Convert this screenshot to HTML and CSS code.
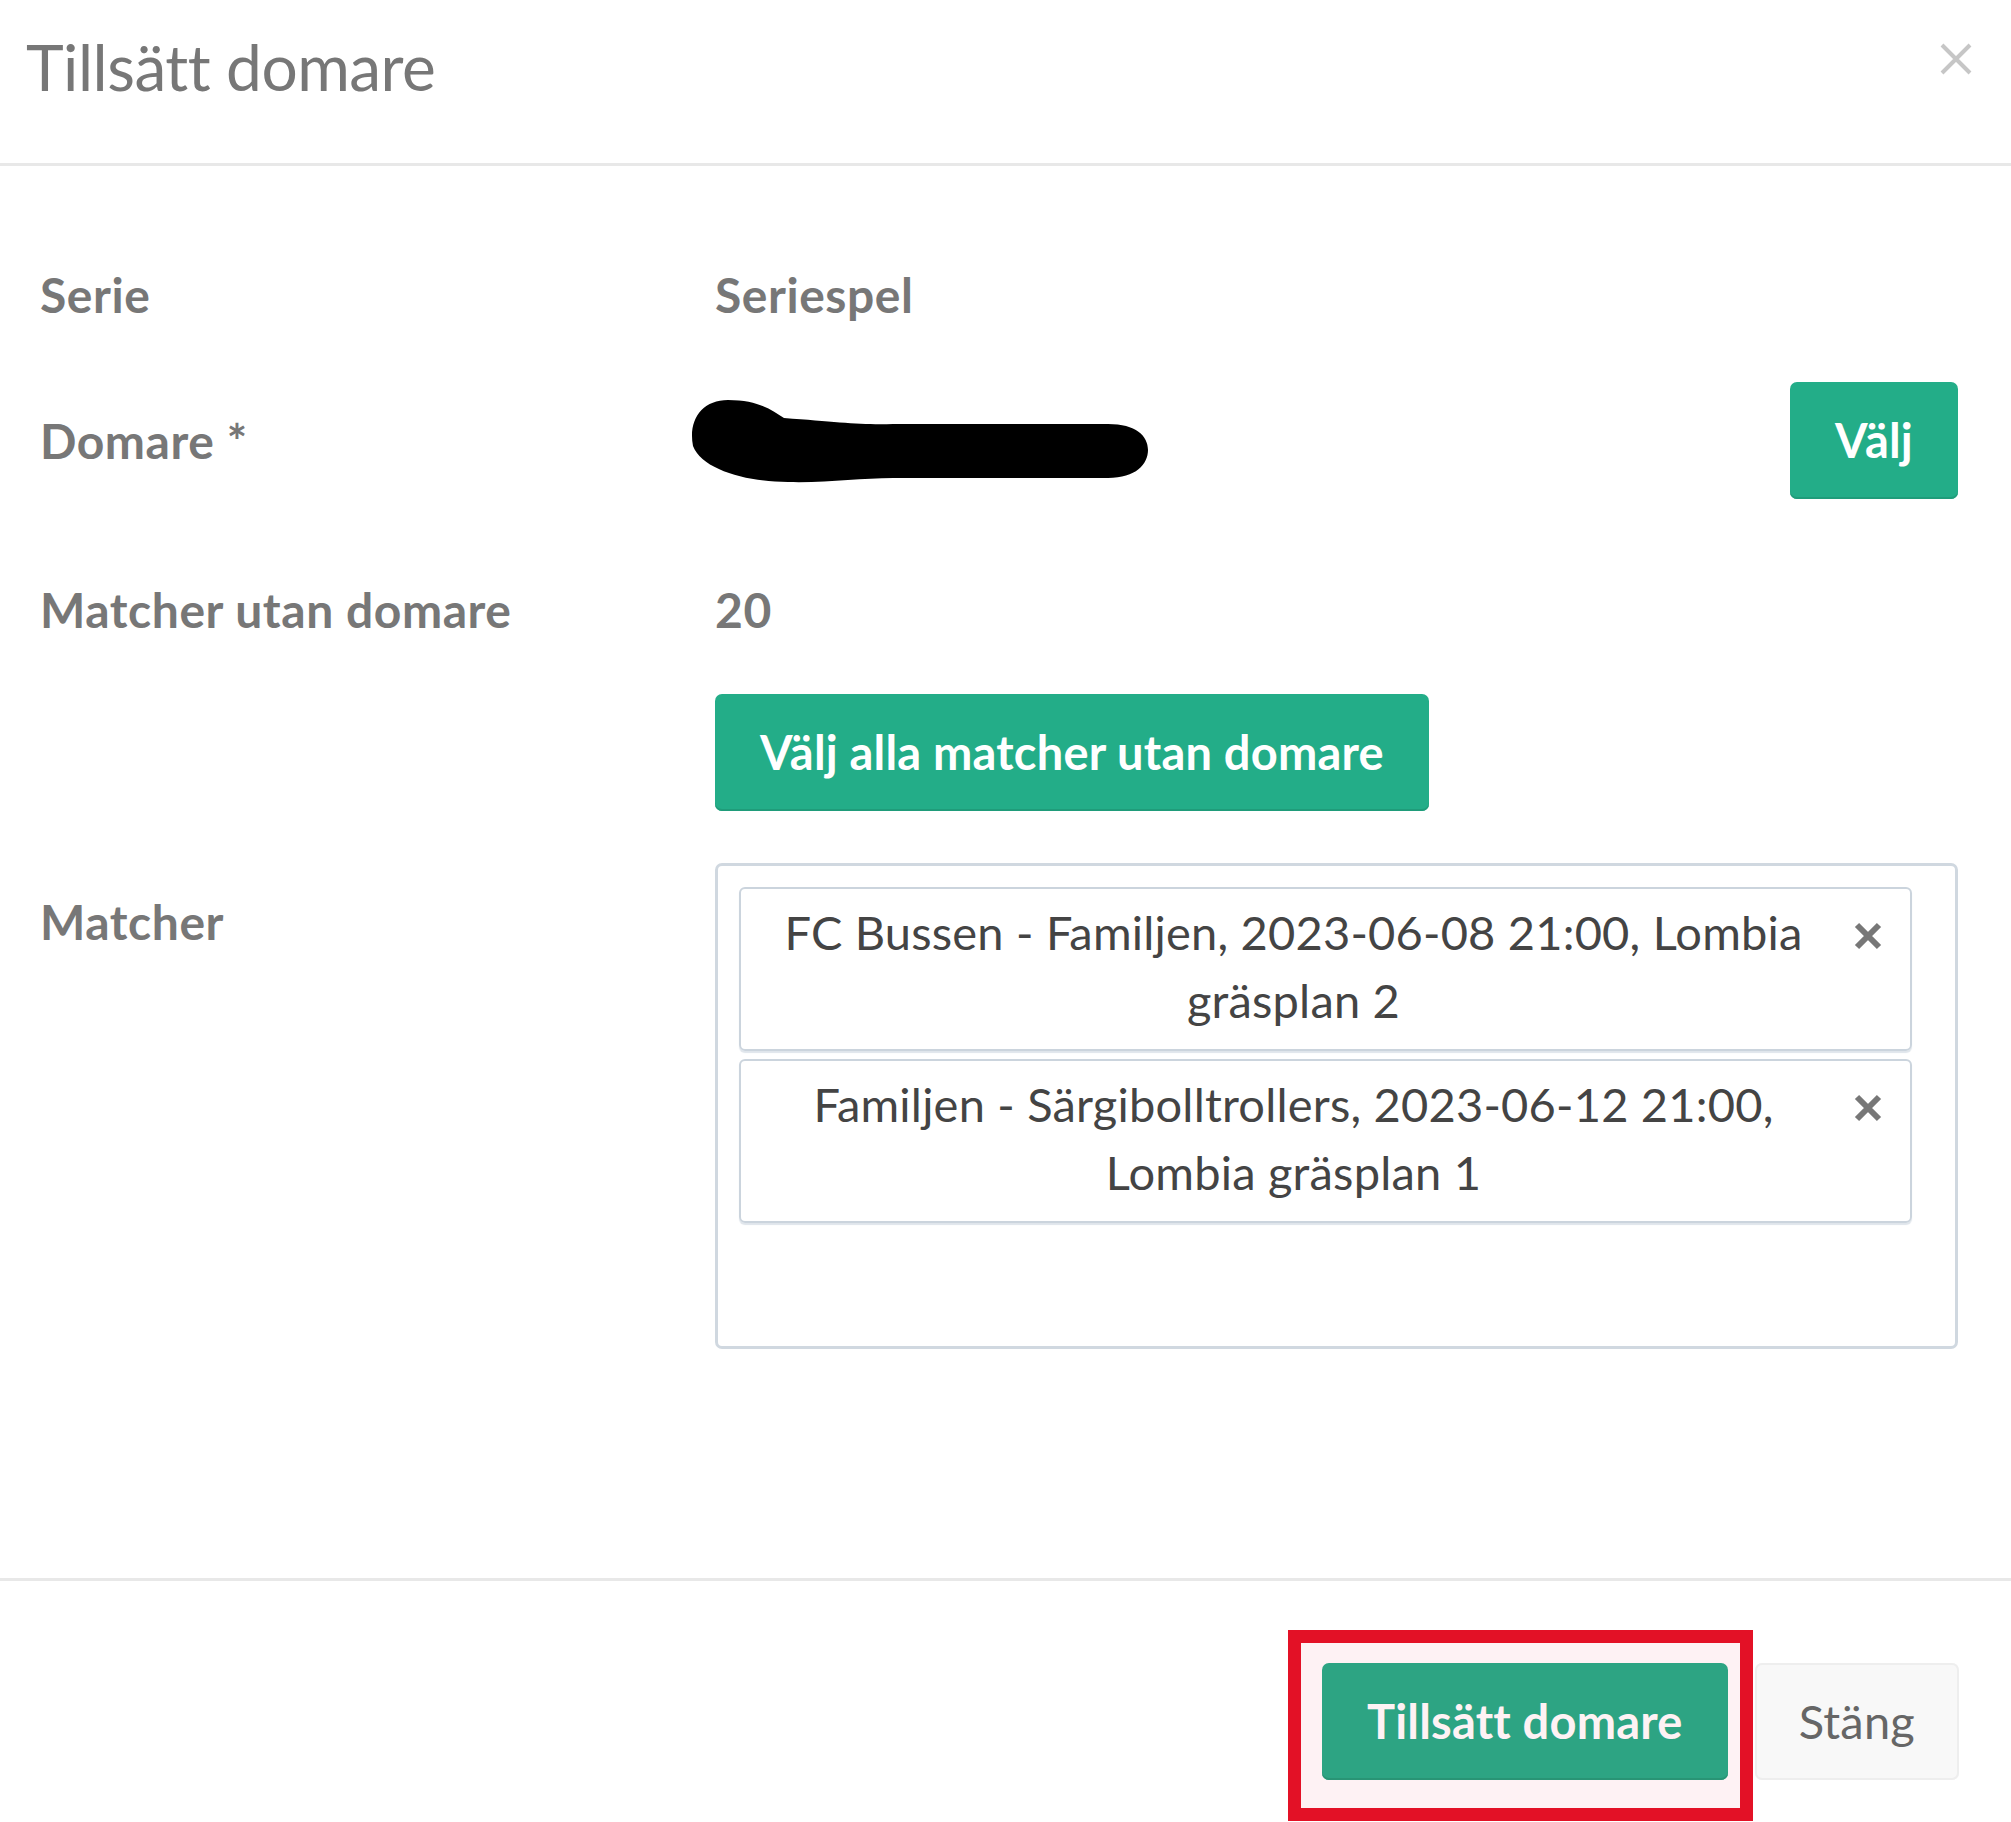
FILE: index.html
```html
<!DOCTYPE html>
<html lang="sv">
<head>
<meta charset="utf-8">
<title>Tillsätt domare</title>
<link rel="stylesheet" href="styles.css">
</head>
<body>
<div class="modal">
  <div class="modal-header">
    <h4 class="modal-title">Tillsätt domare</h4>
    <button class="close" type="button" aria-label="Stäng">
      <svg width="32" height="32" viewBox="0 0 32 32"><path d="M2 2 L30 30 M30 2 L2 30" stroke="#c6c6c6" stroke-width="4" fill="none"/></svg>
    </button>
  </div>

  <div class="modal-body">
    <div class="form-group tight">
      <label class="control-label">Serie</label>
      <div class="static">Seriespel</div>
    </div>

    <div class="form-group">
      <label class="control-label">Domare <span class="req">*</span></label>
      <div class="value-row">
        <svg class="redact" width="462" height="86" viewBox="0 0 462 86"><path d="M40 2 C70 2 84 12 96 20 C150 24 172 27 205 26 L420 26 C448 26 460 38 460 52 C460 66 448 80 420 80 L205 80 C172 80 140 85 100 84 C60 84 14 72 5 48 C0 22 14 2 40 2 Z" fill="#000"/></svg>
        <button class="btn btn-success" type="button">Välj</button>
      </div>
    </div>

    <div class="form-group tighter">
      <label class="control-label">Matcher utan domare</label>
      <div class="static">20</div>
    </div>

    <div class="form-group">
      <span class="control-label empty"></span>
      <div><button class="btn btn-success" type="button">Välj alla matcher utan domare</button></div>
    </div>

    <div class="form-group last">
      <label class="control-label">Matcher</label>
      <div class="multiselect">
        <div class="choice">
          <span class="choice-text">FC Bussen - Familjen, 2023-06-08 21:00, Lombia<br>gräsplan 2</span>
          <span class="remove"><svg width="30" height="30" viewBox="0 0 30 30"><path d="M4 4 L26 26 M26 4 L4 26" stroke="#777" stroke-width="6" fill="none"/></svg></span>
        </div>
        <div class="choice">
          <span class="choice-text">Familjen - Särgibolltrollers, 2023-06-12 21:00,<br>Lombia gräsplan 1</span>
          <span class="remove"><svg width="30" height="30" viewBox="0 0 30 30"><path d="M4 4 L26 26 M26 4 L4 26" stroke="#777" stroke-width="6" fill="none"/></svg></span>
        </div>
      </div>
    </div>
  </div>

  <div class="modal-footer">
    <span class="highlight">
      <button class="btn btn-success" type="button">Tillsätt domare</button>
      <span class="annotation"></span>
    </span>
    <button class="btn btn-default" type="button">Stäng</button>
  </div>
</div>
</body>
</html>
```
FILE: styles.css
```css
html, body {
  margin: 0;
  padding: 0;
  background: #fff;
}

body {
  font-family: Lato, "Liberation Sans", sans-serif;
  color: #777;
  overflow: hidden;
}

.modal {
  width: 2011px;
  height: 1822px;
  display: flex;
  flex-direction: column;
}

.modal-header {
  display: flex;
  justify-content: space-between;
  align-items: flex-start;
  height: 166px;
  padding: 32px 39px 0 26px;
  box-sizing: border-box;
  border-bottom: 3px solid #e8e8e8;
  flex: none;
}

.modal-title {
  margin: 0;
  font-size: 64px;
  line-height: 70px;
  font-weight: 400;
  letter-spacing: -0.5px;
  color: #777;
}

.close {
  margin-top: 11px;
  padding: 0;
  border: 0;
  background: none;
  width: 32px;
  height: 32px;
  display: block;
}

.close svg {
  display: block;
}

.modal-body {
  padding: 70px 53px 0 40px;
  flex: none;
  height: 1412px;
  box-sizing: border-box;
}

.form-group {
  display: grid;
  grid-template-columns: 675px 1fr;
  margin-bottom: 52px;
}

.form-group.tight {
  margin-bottom: 29px;
}

.form-group.tighter {
  margin-bottom: 26px;
}

.form-group.last {
  margin-bottom: 0;
}

.control-label,
.static {
  font-size: 48px;
  line-height: 67px;
  font-weight: 700;
  letter-spacing: 0.55px;
  color: #777;
}

.control-label {
  padding-top: 25px;
}

.static {
  padding: 25px 0;
}

.req {
  font-weight: 700;
}

.value-row {
  display: flex;
  justify-content: space-between;
  align-items: center;
}

.redact {
  display: block;
  margin-left: -27px;
}

.btn {
  display: inline-block;
  font-family: Lato, "Liberation Sans", sans-serif;
  font-size: 47px;
  line-height: 67px;
  font-weight: 700;
  letter-spacing: 0.2px;
  padding: 25px 45px;
  border-radius: 7px;
  border: 0;
  cursor: pointer;
}

.btn-success {
  background: #23ad88;
  color: #fff;
  box-shadow: inset 0 -2px 0 #1f9c7a;
}

.btn-default {
  background: #f8f8f8;
  color: #666;
  font-weight: 400;
  box-shadow: inset 0 0 0 2px #eeeeee;
  padding: 25px 44px;
}

.multiselect {
  border: 3px solid #d0d8e0;
  border-radius: 7px;
  height: 486px;
  box-sizing: border-box;
  padding: 21px 43px 0 21px;
}

.choice {
  display: flex;
  align-items: flex-start;
  border: 2px solid #cbd4dd;
  border-radius: 6px;
  padding: 9px 26px 15px 25px;
  margin-bottom: 8px;
  box-shadow: 0 2px 1px #dfe5eb;
}

.choice-text {
  flex: 1;
  text-align: center;
  font-size: 47px;
  line-height: 68px;
  font-weight: 400;
  letter-spacing: 0.2px;
  color: #444;
  margin-right: 31px;
}

.remove {
  display: block;
  width: 32px;
  height: 30px;
  margin-top: 23px;
}

.remove svg {
  display: block;
  margin-left: 1px;
}

.modal-footer {
  flex: 1;
  border-top: 3px solid #e8e8e8;
  display: flex;
  justify-content: flex-end;
  align-items: flex-start;
  gap: 27px;
  padding: 82px 52px 0 0;
}

.highlight {
  position: relative;
  display: inline-flex;
}

.annotation {
  position: absolute;
  left: -34px;
  top: -33px;
  right: -25px;
  bottom: -41px;
  border: 13px solid #e31126;
  background: rgba(235, 0, 30, 0.05);
  pointer-events: none;
}
```
